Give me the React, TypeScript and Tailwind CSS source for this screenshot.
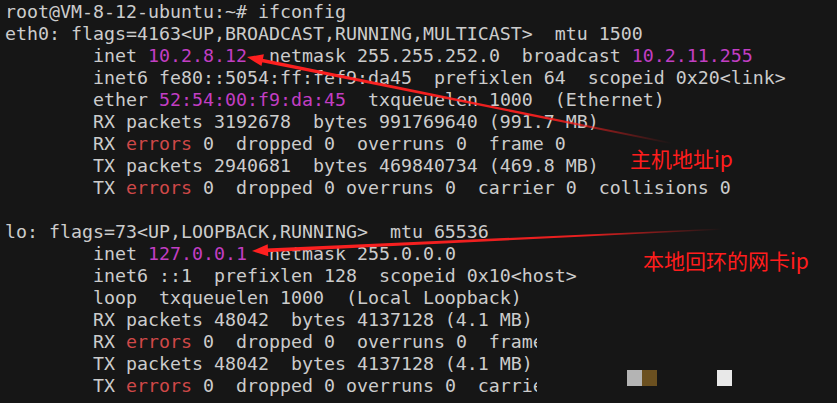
import React from "react";

type Seg = { t: string; c?: "p" | "r" };

const P = (t: string): Seg => ({ t, c: "p" });
const R = (t: string): Seg => ({ t, c: "r" });
const N = (t: string): Seg => ({ t });

const pad = "        ";

const lines: Seg[][] = [
  [N("root@VM-8-12-ubuntu:~# ifconfig")],
  [N("eth0: flags=4163<UP,BROADCAST,RUNNING,MULTICAST>  mtu 1500")],
  [N(pad + "inet "), P("10.2.8.12"), N("  netmask 255.255.252.0  broadcast "), P("10.2.11.255")],
  [N(pad + "inet6 fe80::5054:ff:fef9:da45  prefixlen 64  scopeid 0x20<link>")],
  [N(pad + "ether "), P("52:54:00:f9:da:45"), N("  txqueuelen 1000  (Ethernet)")],
  [N(pad + "RX packets 3192678  bytes 991769640 (991.7 MB)")],
  [N(pad + "RX "), R("errors"), N(" 0  dropped 0  overruns 0  frame 0")],
  [N(pad + "TX packets 2940681  bytes 469840734 (469.8 MB)")],
  [N(pad + "TX "), R("errors"), N(" 0  dropped 0 overruns 0  carrier 0  collisions 0")],
  [N("")],
  [N("lo: flags=73<UP,LOOPBACK,RUNNING>  mtu 65536")],
  [N(pad + "inet "), P("127.0.0.1"), N("  netmask 255.0.0.0")],
  [N(pad + "inet6 ::1  prefixlen 128  scopeid 0x10<host>")],
  [N(pad + "loop  txqueuelen 1000  (Local Loopback)")],
  [N(pad + "RX packets 48042  bytes 4137128 (4.1 MB)")],
  [N(pad + "RX "), R("errors"), N(" 0  dropped 0  overruns 0  frame 0")],
  [N(pad + "TX packets 48042  bytes 4137128 (4.1 MB)")],
  [N(pad + "TX "), R("errors"), N(" 0  dropped 0 overruns 0  carrier 0  collisions 0")],
];

// red annotation arrows drawn over the terminal
function Arrows() {
  return (
    <svg className="absolute inset-0 pointer-events-none" width="837" height="403">
      <defs>
        <linearGradient id="g1" gradientUnits="userSpaceOnUse" x1="262" y1="60" x2="672" y2="143">
          <stop offset="0" stopColor="#ff2020" stopOpacity="1" />
          <stop offset="0.7" stopColor="#ff2020" stopOpacity="0.9" />
          <stop offset="1" stopColor="#ff2020" stopOpacity="0" />
        </linearGradient>
        <linearGradient id="g2" gradientUnits="userSpaceOnUse" x1="266" y1="250" x2="722" y2="229">
          <stop offset="0" stopColor="#ff2020" stopOpacity="1" />
          <stop offset="0.7" stopColor="#ff2020" stopOpacity="0.9" />
          <stop offset="1" stopColor="#ff2020" stopOpacity="0" />
        </linearGradient>
      </defs>
      <polygon points="260,58.2 672,142.6 671,144 259.4,61.8" fill="url(#g1)" />
      <polygon points="247,57 261.5,66.1 263.9,54.3" fill="#ff2020" />
      <polygon points="266,248.6 722,228.4 722,229.8 266,252.2" fill="url(#g2)" />
      <polygon points="252,251 268.3,256.2 267.7,244.2" fill="#ff2020" />
      <text x="630" y="167" fill="#ff1d1d" fontSize="21" fontFamily="'Noto Sans CJK SC', sans-serif">
        主机地址ip
      </text>
      <text x="643" y="269" fill="#ff1d1d" fontSize="21" fontFamily="'Noto Sans CJK SC', sans-serif">
        本地回环的网卡ip
      </text>
    </svg>
  );
}

export default function App() {
  return (
    <div className="relative w-[837px] h-[403px] overflow-hidden bg-[#161616]">
      <div className="pt-[1px] pl-[5px] font-['DejaVu_Sans_Mono',monospace] text-[18.27px] leading-[22px] text-[#cccccc]">
        {lines.map((l, i) => (
          <div key={i} className="h-[22px] whitespace-pre">
            {l.map((s, j) => (
              <span
                key={j}
                className={s.c === "p" ? "text-[#c23ec3]" : s.c === "r" ? "text-[#cf4848]" : ""}
              >
                {s.t}
              </span>
            ))}
          </div>
        ))}
      </div>

      {/* cropped corner of the screenshot, with a few leftover pixels */}
      <div className="absolute left-[537px] top-[331px] right-0 bottom-0 bg-[#161616] pt-[39px] pl-[90px] flex">
        <div className="w-[15px] h-[16px] bg-[#b4b4b4]" />
        <div className="w-[15px] h-[16px] bg-[#6b5020]" />
        <div className="w-[15px] h-[16px] bg-[#e8e8e8] ml-[60px]" />
      </div>

      <Arrows />
    </div>
  );
}
